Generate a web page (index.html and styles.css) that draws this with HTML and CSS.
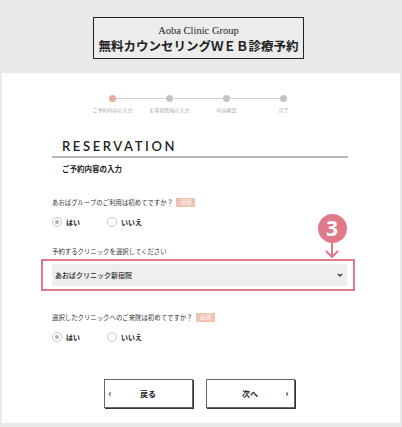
FILE: index.html
```html
<!DOCTYPE html>
<html lang="ja">
<head>
  <meta charset="UTF-8" />
  <meta name="viewport" content="width=device-width, initial-scale=1.0" />
  <title>Aoba Clinic Group - WEB予約</title>
  <link rel="stylesheet" href="styles.css">
</head>
<body>
  <div class="page">
    <header class="top">
      <div class="brand">
        <div class="brand-en">Aoba Clinic Group</div>
        <div class="brand-ja">無料カウンセリングＷＥＢ診療予約</div>
      </div>
    </header>

    <main class="sheet">
      <ol class="steps">
        <li class="step active"><span class="dot"></span>ご予約内容の入力</li>
        <li class="step"><span class="dot"></span>お客様情報の入力</li>
        <li class="step"><span class="dot"></span>内容確認</li>
        <li class="step"><span class="dot"></span>完了</li>
      </ol>

      <div class="content">
        <h1 class="heading">RESERVATION</h1>
        <h2 class="subheading">ご予約内容の入力</h2>

        <p class="question q-first">あおばグループのご利用は初めてですか？ <span class="req">必須</span></p>
        <div class="radios">
          <label class="radio"><span class="mark checked"></span>はい</label>
          <label class="radio"><span class="mark"></span>いいえ</label>
        </div>

        <p class="question q-clinic">予約するクリニックを選択してください</p>
        <div class="highlight">
          <div class="select">
            <span>あおばクリニック新宿院</span>
            <svg class="chev" width="6" height="4" viewBox="0 0 6 4"><path d="M0.8 0.8 L3 3 L5.2 0.8" fill="none" stroke="#222" stroke-width="1.2"/></svg>
          </div>
          <div class="callout">
            <span class="num">3</span>
            <svg class="arrow" width="14" height="17" viewBox="0 0 14 17"><path d="M7 0 V15 M1.5 9.5 L7 15 L12.5 9.5" fill="none" stroke="#e07a8b" stroke-width="2" stroke-linecap="round" stroke-linejoin="round"/></svg>
          </div>
        </div>

        <p class="question q-second">選択したクリニックへのご来院は初めてですか？ <span class="req">必須</span></p>
        <div class="radios">
          <label class="radio"><span class="mark checked"></span>はい</label>
          <label class="radio"><span class="mark"></span>いいえ</label>
        </div>

        <div class="actions">
          <button class="btn back">戻る</button>
          <button class="btn next">次へ</button>
        </div>
      </div>
    </main>
  </div>
</body>
</html>
```

FILE: styles.css
```css
* { box-sizing: border-box; margin: 0; padding: 0; }
body {
  background-color: #e9e9e9;
  font-family: "Noto Sans CJK JP", "Noto Sans", sans-serif;
  color: #222;
}
.page { padding: 0 2px 4px 2px; }

/* header */
.top {
  height: 73px;
  padding-top: 17px;
  display: flex;
  justify-content: center;
}
.brand {
  width: 211px;
  height: 42px;
  margin-right: 5px;
  border: 1px solid #222;
  background-color: #ececec;
  text-align: center;
}
.brand-en {
  font-family: "Liberation Serif", serif;
  font-size: 10.5px;
  line-height: 12px;
  margin-top: 7px;
}
.brand-ja {
  font-size: 12.5px;
  font-weight: bold;
  line-height: 16px;
  margin-top: 1px;
}

/* white sheet */
.sheet {
  background-color: #fff;
  height: 350px;
}

/* progress steps */
.steps {
  list-style: none;
  display: flex;
  margin-left: 82px;
  padding-top: 22px;
  position: relative;
}
.steps::before {
  content: "";
  position: absolute;
  top: 25px;
  left: 29px;
  width: 171px;
  height: 1px;
  background-color: #d0d0d0;
}
.step {
  width: 57px;
  text-align: center;
  font-size: 5px;
  line-height: 6px;
  color: #aaa;
  position: relative;
}
.dot {
  display: block;
  width: 7px;
  height: 7px;
  margin: 0 auto 5px;
  border-radius: 50%;
  background-color: #c4c4c4;
}
.step.active .dot { background-color: #eaa99a; }

/* form */
.content { margin: 0 52px 0 50px; }
.heading {
  margin-top: 25px;
  padding: 0 0 2px 10px;
  border-bottom: 2px solid #b8b8b8;
  font-family: Lato, "Open Sans", sans-serif;
  font-size: 13px;
  font-weight: 600;
  line-height: 16px;
  letter-spacing: 2.6px;
  color: #1e1e1e;
}
.subheading {
  margin: 6px 0 0 10px;
  font-size: 7.5px;
  line-height: 10px;
  font-weight: bold;
}
.question {
  font-size: 6.4px;
  line-height: 10px;
  color: #333;
}
.q-first { margin-top: 24px; }
.q-clinic { margin-top: 19px; }
.q-second { margin-top: 22px; }
.req {
  display: inline-block;
  margin-left: 2px;
  padding: 0 4px;
  background-color: #f0c2b2;
  color: #fff;
  font-size: 5.5px;
  line-height: 9px;
  vertical-align: 1px;
}
.radios {
  display: flex;
  margin-top: 8px;
  height: 12px;
  align-items: center;
}
.radio {
  display: flex;
  align-items: center;
  width: 55px;
  font-size: 7px;
  font-weight: bold;
}
.mark {
  width: 10px;
  height: 10px;
  margin-right: 4px;
  border: 1px solid #c8c8c8;
  border-radius: 50%;
  display: flex;
  align-items: center;
  justify-content: center;
}
.mark.checked::after {
  content: "";
  width: 4px;
  height: 4px;
  border-radius: 50%;
  background-color: #b0b0b0;
}

/* highlighted select */
.highlight {
  position: relative;
  margin: 2px -7px 0 -11px;
  padding: 3px 6px 3px 9px;
  border: 2px solid #e07a8b;
}
.select {
  height: 22px;
  background-color: #efefef;
  display: flex;
  align-items: center;
  justify-content: space-between;
  padding: 0 4px 0 3px;
  font-size: 7px;
  font-weight: 500;
}
.callout {
  position: absolute;
  top: -47px;
  left: 274px;
  width: 30px;
  display: flex;
  flex-direction: column;
  align-items: center;
}
.num {
  width: 29px;
  height: 29px;
  border-radius: 50%;
  background-color: #e07a8b;
  color: #fff;
  font-family: "Noto Sans", sans-serif;
  font-size: 21px;
  font-weight: bold;
  line-height: 29px;
  text-align: center;
}
.arrow { margin-top: -1px; }

/* buttons */
.actions {
  display: flex;
  justify-content: center;
  gap: 13px;
  margin: 36px 0 0 -2px;
}
.btn {
  width: 89px;
  height: 29px;
  border: 1px solid #666;
  box-shadow: 1px 1px 0 #333;
  background-color: #fff;
  font-family: "Noto Sans CJK JP", sans-serif;
  font-size: 8px;
  font-weight: bold;
  color: #222;
  position: relative;
}
.btn.back::before {
  content: "‹";
  position: absolute;
  left: 4px;
  top: 7px;
  font-size: 9px;
}
.btn.next::after {
  content: "›";
  position: absolute;
  right: 5px;
  top: 7px;
  font-size: 9px;
}
```
